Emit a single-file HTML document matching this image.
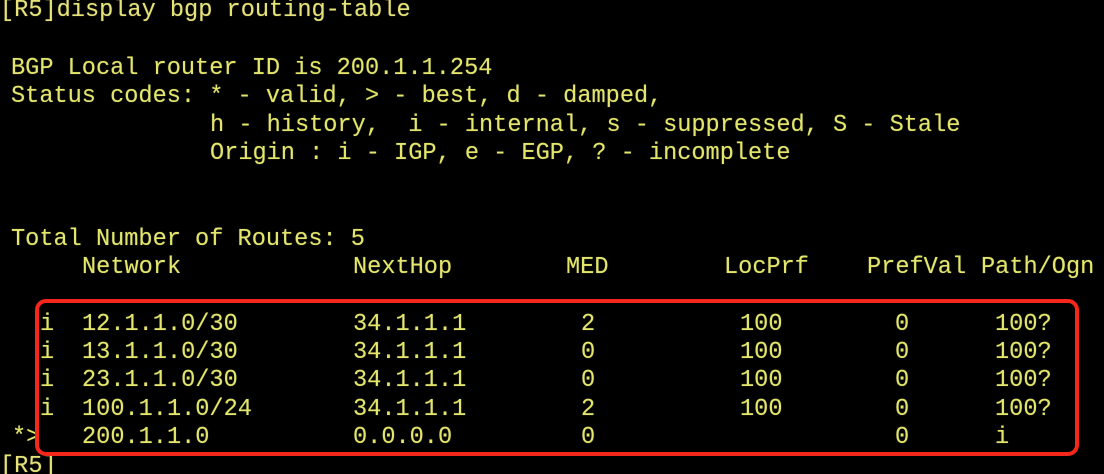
<!DOCTYPE html>
<html><head><meta charset="utf-8"><style>
html,body{margin:0;padding:0;background:#000;width:1104px;height:474px;overflow:hidden}
body{position:relative;font-family:"Liberation Mono",monospace;font-size:23.6px;color:#e3e56c;}
div.t{position:absolute;white-space:pre;line-height:28px;height:28px;text-shadow:0 0 1px rgba(227,229,108,.5)}
.box{position:absolute;left:35px;top:299px;width:1036px;height:149px;border:4.5px solid #f5261a;border-radius:11px}
</style></head><body>
<div class="t" style="left:0;top:-3px;color:#e6e27a">[R5]display bgp routing-table</div>
<div class="t" style="left:11px;top:55px">BGP Local router ID is 200.1.1.254</div>
<div class="t" style="left:11px;top:83px">Status codes: * - valid, &gt; - best, d - damped,</div>
<div class="t" style="left:210px;top:112px">h - history,  i - internal, s - suppressed, S - Stale</div>
<div class="t" style="left:210px;top:140px">Origin : i - IGP, e - EGP, ? - incomplete</div>
<div class="t" style="left:11px;top:226px">Total Number of Routes: 5</div>
<div class="t" style="left:82px;top:254px">Network</div>
<div class="t" style="left:353px;top:254px">NextHop</div>
<div class="t" style="left:566px;top:254px">MED</div>
<div class="t" style="left:724px;top:254px">LocPrf</div>
<div class="t" style="left:867px;top:254px">PrefVal</div>
<div class="t" style="left:981px;top:254px">Path/Ogn</div>

<div class="t" style="left:40px;top:311px">i</div><div class="t" style="left:82px;top:311px">12.1.1.0/30</div><div class="t" style="left:353px;top:311px">34.1.1.1</div><div class="t" style="left:581px;top:311px">2</div><div class="t" style="left:740px;top:311px">100</div><div class="t" style="left:895px;top:311px">0</div><div class="t" style="left:995px;top:311px">100?</div>
<div class="t" style="left:40px;top:339px">i</div><div class="t" style="left:82px;top:339px">13.1.1.0/30</div><div class="t" style="left:353px;top:339px">34.1.1.1</div><div class="t" style="left:581px;top:339px">0</div><div class="t" style="left:740px;top:339px">100</div><div class="t" style="left:895px;top:339px">0</div><div class="t" style="left:995px;top:339px">100?</div>
<div class="t" style="left:40px;top:367px">i</div><div class="t" style="left:82px;top:367px">23.1.1.0/30</div><div class="t" style="left:353px;top:367px">34.1.1.1</div><div class="t" style="left:581px;top:367px">0</div><div class="t" style="left:740px;top:367px">100</div><div class="t" style="left:895px;top:367px">0</div><div class="t" style="left:995px;top:367px">100?</div>
<div class="t" style="left:40px;top:396px">i</div><div class="t" style="left:82px;top:396px">100.1.1.0/24</div><div class="t" style="left:353px;top:396px">34.1.1.1</div><div class="t" style="left:581px;top:396px">2</div><div class="t" style="left:740px;top:396px">100</div><div class="t" style="left:895px;top:396px">0</div><div class="t" style="left:995px;top:396px">100?</div>
<div class="t" style="left:12px;top:424px">*&gt;</div><div class="t" style="left:82px;top:424px">200.1.1.0</div><div class="t" style="left:353px;top:424px">0.0.0.0</div><div class="t" style="left:581px;top:424px">0</div><div class="t" style="left:895px;top:424px">0</div><div class="t" style="left:995px;top:424px">i</div>
<div class="t" style="left:0;top:453px;color:#e6e27a">[R5]</div>
<div class="box"></div>
</body></html>
